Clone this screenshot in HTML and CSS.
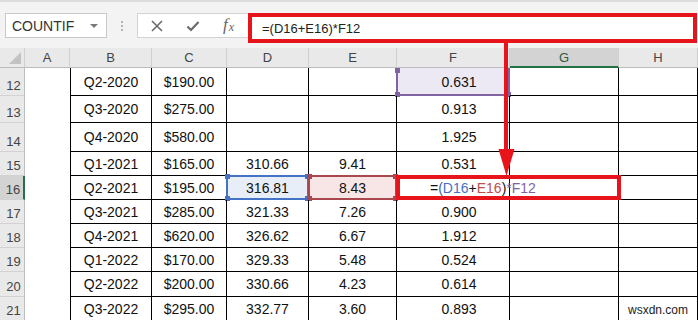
FILE: index.html
```html
<!DOCTYPE html>
<html>
<head>
<meta charset="utf-8">
<link rel="stylesheet" href="styles.css">
</head>
<body>
<div class="app">
  <div class="toolbar">
    <div class="namebox"><span>COUNTIF</span><span class="dd"></span></div>
    <div class="sep"><span></span><span></span><span></span></div>
    <div class="fxbox">
      <svg class="ico" width="14" height="14" viewBox="0 0 14 14"><path d="M2 2 L12 12 M12 2 L2 12" stroke="#6b6b6b" stroke-width="1.6" fill="none"/></svg>
      <svg class="ico" width="14" height="14" viewBox="0 0 14 14"><path d="M1.5 7.5 L5 11 L12.5 3" stroke="#6b6b6b" stroke-width="2.2" fill="none"/></svg>
      <span class="fx">f<span class="x">x</span></span>
    </div>
    <div class="formula">=(D16+E16)*F12</div>
  </div>
  <div class="sheet">
    <div class="hd corner"><span class="tri"></span></div>
    <div class="hd">A</div><div class="hd">B</div><div class="hd">C</div><div class="hd">D</div><div class="hd">E</div><div class="hd">F</div><div class="hd hsel">G</div><div class="hd">H</div>

    <div class="rh">12</div><div class="a"></div><div class="c b">Q2-2020</div><div class="c">$190.00</div><div class="c"></div><div class="c"></div><div class="c f purple"><i class="hl"><b class="sq tl"></b><b class="sq bl"></b><b class="sq br"></b></i>0.631</div><div class="c"></div><div class="c"></div>
    <div class="rh">13</div><div class="a"></div><div class="c b">Q3-2020</div><div class="c">$275.00</div><div class="c"></div><div class="c"></div><div class="c f">0.913</div><div class="c"></div><div class="c"></div>
    <div class="rh">14</div><div class="a"></div><div class="c b">Q4-2020</div><div class="c">$580.00</div><div class="c"></div><div class="c"></div><div class="c f">1.925</div><div class="c"></div><div class="c"></div>
    <div class="rh">15</div><div class="a"></div><div class="c b">Q1-2021</div><div class="c">$165.00</div><div class="c">310.66</div><div class="c">9.41</div><div class="c f">0.531</div><div class="c"></div><div class="c"></div>
    <div class="rh rsel">16</div><div class="a"></div><div class="c b">Q2-2021</div><div class="c">$195.00</div><div class="c blue"><i class="hl"><b class="sq tl"></b><b class="sq tr"></b><b class="sq bl"></b><b class="sq br"></b></i>316.81</div><div class="c red"><i class="hl"><b class="sq tl"></b><b class="sq tr"></b><b class="sq bl"></b><b class="sq br"></b></i>8.43</div><div class="c f"></div><div class="c"></div><div class="c"></div>
    <div class="rh">17</div><div class="a"></div><div class="c b">Q3-2021</div><div class="c">$285.00</div><div class="c">321.33</div><div class="c">7.26</div><div class="c f">0.900</div><div class="c"></div><div class="c"></div>
    <div class="rh">18</div><div class="a"></div><div class="c b">Q4-2021</div><div class="c">$620.00</div><div class="c">326.62</div><div class="c">6.67</div><div class="c f">1.912</div><div class="c"></div><div class="c"></div>
    <div class="rh">19</div><div class="a"></div><div class="c b">Q1-2022</div><div class="c">$170.00</div><div class="c">329.33</div><div class="c">5.48</div><div class="c f">0.524</div><div class="c"></div><div class="c"></div>
    <div class="rh">20</div><div class="a"></div><div class="c b">Q2-2022</div><div class="c">$200.00</div><div class="c">330.66</div><div class="c">4.23</div><div class="c f">0.614</div><div class="c"></div><div class="c"></div>
    <div class="rh">21</div><div class="a"></div><div class="c b">Q3-2022</div><div class="c">$295.00</div><div class="c">332.77</div><div class="c">3.60</div><div class="c f">0.893</div><div class="c"></div><div class="c wm">wsxdn.com</div>
  </div>

  <div class="editbox">=<span class="k">(</span><span class="rb">D16</span>+<span class="rr">E16</span>)<span class="rp">*F12</span></div>
  <svg class="arrow" width="22" height="140" viewBox="0 0 22 140">
    <rect x="8" y="0" width="4" height="112" fill="#e8141b"/>
    <polygon points="2.5,108 18.5,108 10.5,135" fill="#e8141b"/>
  </svg>
</div>
</body>
</html>
```

FILE: styles.css
```css
* { box-sizing: border-box; }
body { margin: 0; font-family: "Liberation Sans", Arial, sans-serif; background: #fff; }
.app { position: relative; width: 698px; height: 320px; overflow: hidden; background: #fff; }

.toolbar {
  height: 48px;
  background: #f3f3f3;
  border-top: 2px solid #dcdcdc;
  display: flex;
  align-items: flex-start;
  padding: 11px 1px 0 5px;
}
.namebox {
  width: 102px; height: 25px;
  background: #fff; border: 1px solid #c9c9c9;
  display: flex; align-items: center;
  padding: 0 8px 0 6px;
  font-size: 14px; color: #333;
}
.dd {
  margin-left: auto;
  width: 0; height: 0;
  border-left: 4px solid transparent; border-right: 4px solid transparent;
  border-top: 4px solid #7a7a7a;
}
.sep {
  width: 30px; height: 25px;
  display: flex; flex-direction: column; align-items: center; justify-content: center; gap: 2px;
}
.sep span { width: 2px; height: 2px; background: #b4b4b4; }
.fxbox {
  width: 111px; height: 25px;
  background: #fff; border: 1px solid #d3d3d3; border-right: none;
  display: flex; align-items: center;
  padding-left: 12px; gap: 22px;
}
.fx {
  font-family: "Liberation Serif", serif; font-style: italic;
  font-size: 17px; line-height: 17px; color: #666; margin-left: 1px;
}
.fx .x { font-size: 12px; margin-left: 1px; position: relative; top: 1px; }
.formula {
  flex: 1; height: 30px;
  background: #fff; border: 4px solid #e8141b;
  display: flex; align-items: center;
  padding-left: 10px;
  font-size: 13px; color: #222;
}

.sheet {
  display: grid;
  grid-template-columns: 25px 45px 82px 75px 82px 88px 113px 109px 79px;
  grid-template-rows: 20px 28px 27px 29px 24px 24px 24px 24px 24px 25px 24px;
}
.hd {
  background: #e9e9e9;
  border-right: 1px solid #cfcfcf;
  border-bottom: 1px solid #bdbdbd;
  display: flex; align-items: center; justify-content: center;
  font-size: 13px; color: #444;
}
.corner { position: relative; }
.tri {
  position: absolute; right: 3px; bottom: 3px;
  width: 0; height: 0;
  border-left: 12px solid transparent;
  border-bottom: 12px solid #c2c2c2;
}
.hsel { background: #d3d3d3; border-bottom: 2px solid #217346; color: #2c5a3c; }
.rh {
  background: #e9e9e9;
  border-right: 1px solid #bdbdbd;
  border-bottom: 1px solid #d2d2d2;
  display: flex; align-items: flex-end; justify-content: center;
  padding: 0 0 2px 3px;
  font-size: 13px; line-height: 15px; color: #444;
}
.rsel { background: #d3d3d3; border-right: 2px solid #217346; }
.a { background: #fff; }
.c {
  position: relative;
  border-right: 1px solid #000;
  border-bottom: 1px solid #000;
  display: flex; align-items: center; justify-content: center;
  font-size: 14px; color: #111;
}
.b { border-left: 1px solid #000; }
.f { padding-left: 12px; }
.wm { font-size: 12px; align-items: flex-end; padding-bottom: 3px; color: #222; }

.hl { position: absolute; top: -1px; left: -1px; right: -1px; bottom: -1px; border: 2px solid; }
.sq { position: absolute; width: 5px; height: 5px; }
.tl { top: -3px; left: -3px; }
.tr { top: -3px; right: -3px; }
.bl { bottom: -3px; left: -3px; }
.br { bottom: -3px; right: -3px; }
.blue { background: #e8eef8; }
.blue .hl { border-color: #4472c4; }
.blue .sq { background: #4472c4; }
.red { background: #f8e6e7; }
.red .hl { border-color: #a9484f; }
.red .sq { background: #a9484f; }
.purple { background: #ece9f4; }
.purple .hl { border-color: #8064a2; border-top: none; top: 0; }
.purple .sq { background: #8064a2; }
.purple .tl { top: 0; }

.editbox {
  position: absolute; left: 396px; top: 175px;
  width: 225px; height: 25px;
  border: 4px solid #e8141b;
  padding-left: 30px;
  display: flex; align-items: center;
  font-size: 14px; color: #111;
}
.k { color: #3c5f94; }
.rb { color: #4472c4; }
.rr { color: #c0504d; }
.rp { color: #8064a2; }
.arrow { position: absolute; left: 496px; top: 41px; }
```
